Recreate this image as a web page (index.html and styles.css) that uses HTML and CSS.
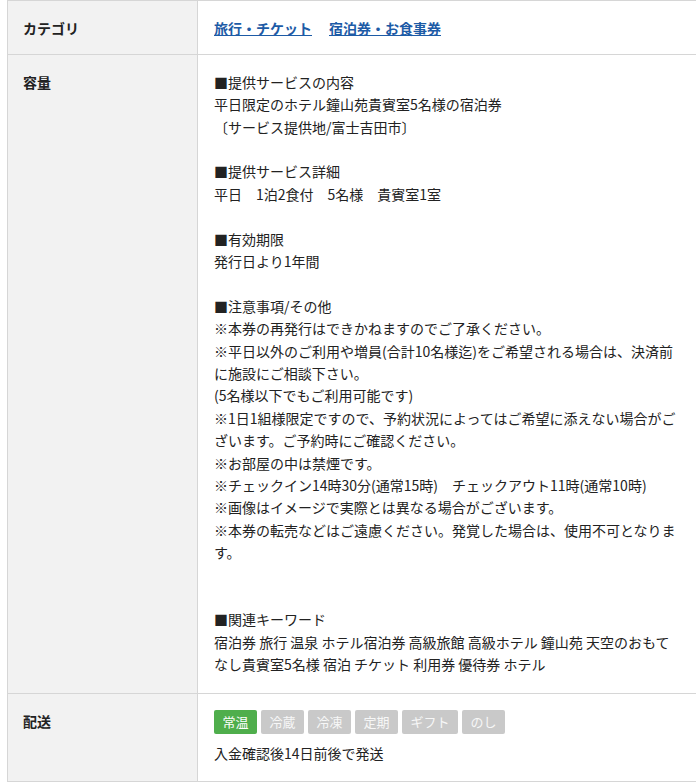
FILE: index.html
```html
<!DOCTYPE html>
<html lang="ja">
<head>
<meta charset="utf-8">
<title>商品情報</title>
<link rel="stylesheet" href="styles.css">
</head>
<body>
<div class="spec">
  <div class="label row-first">カテゴリ</div>
  <div class="value row-first">
    <a class="cat-link" href="#">旅行・チケット</a><a class="cat-link" href="#">宿泊券・お食事券</a>
  </div>

  <div class="label row-mid">容量</div>
  <div class="value row-mid">
    <p class="block">■提供サービスの内容<br>平日限定のホテル鐘山苑貴賓室5名様の宿泊券<br>〔サービス提供地/富士吉田市〕</p>
    <p class="block">■提供サービス詳細<br>平日　1泊2食付　5名様　貴賓室1室</p>
    <p class="block">■有効期限<br>発行日より1年間</p>
    <p class="block block-wide">■注意事項/その他<br>※本券の再発行はできかねますのでご了承ください。<br>※平日以外のご利用や増員(合計10名様迄)をご希望される場合は、決済前に施設にご相談下さい。<br>(5名様以下でもご利用可能です)<br>※1日1組様限定ですので、予約状況によってはご希望に添えない場合がございます。ご予約時にご確認ください。<br>※お部屋の中は禁煙です。<br>※チェックイン14時30分(通常15時)　チェックアウト11時(通常10時)<br>※画像はイメージで実際とは異なる場合がございます。<br>※本券の転売などはご遠慮ください。発覚した場合は、使用不可となります。</p>
    <p class="block last">■関連キーワード<br>宿泊券 旅行 温泉 ホテル宿泊券 高級旅館 高級ホテル 鐘山苑 天空のおもてなし貴賓室5名様 宿泊 チケット 利用券 優待券 ホテル</p>
  </div>

  <div class="label">配送</div>
  <div class="value">
    <ul class="tags">
      <li class="tag on">常温</li>
      <li class="tag">冷蔵</li>
      <li class="tag">冷凍</li>
      <li class="tag">定期</li>
      <li class="tag">ギフト</li>
      <li class="tag">のし</li>
    </ul>
    <p class="ship-note">入金確認後14日前後で発送</p>
  </div>
</div>
</body>
</html>
```
FILE: styles.css
```css
html, body {
  margin: 0;
  padding: 0;
  background: #ffffff;
}

body {
  font-family: "Noto Sans CJK JP", "Noto Sans", sans-serif;
  font-size: 14px;
  line-height: 1.6;
  color: #222222;
}

.spec {
  margin-left: 7px;
  width: 689px;
  display: grid;
  grid-template-columns: 190px 1fr;
  border-top: 1px solid #d6d6d6;
  border-left: 1px solid #d6d6d6;
}

.label {
  background: #f2f2f2;
  border-right: 1px solid #d6d6d6;
  border-bottom: 1px solid #d6d6d6;
  padding: 16px 15px;
  font-weight: bold;
}

.value {
  border-bottom: 1px solid #d6d6d6;
  padding: 16px 16px;
}

.row-first {
  padding-top: 15.5px;
  padding-bottom: 15px;
}

.row-mid {
  padding-bottom: 18px;
}

.cat-link {
  color: #1d5ba6;
  font-weight: bold;
  text-decoration: underline;
  margin-right: 17px;
}

.block {
  margin: 0 0 22.4px;
}

.block-wide {
  margin-bottom: 44.8px;
}

.block.last {
  margin-bottom: 0;
}

.tags {
  list-style: none;
  margin: 0;
  padding: 0;
  display: flex;
  gap: 4px;
}

.tag {
  background: #c9c9c9;
  color: #f7f7f7;
  font-size: 13px;
  line-height: 24px;
  height: 24px;
  padding: 0 8.5px;
  border-radius: 2px;
}

.tag.on {
  background: #4fae4c;
  color: #ffffff;
}

.ship-note {
  margin: 8px 0 0;
}
```
